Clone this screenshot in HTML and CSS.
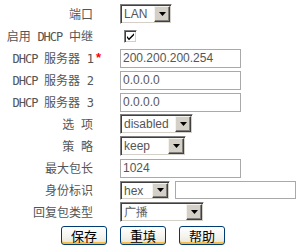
FILE: index.html
```html
<!DOCTYPE html>
<html>
<head>
<meta charset="utf-8">
<link rel="stylesheet" href="styles.css">
</head>
<body>
<form class="form">
  <div class="row">
    <span class="lbl">端口</span>
    <span class="ctl">
      <span class="sel w-lan"><select class="sel-in"><option>LAN</option></select><span class="sel-btn"><svg width="7" height="4" viewBox="0 0 7 4"><path d="M0 0H7L3.5 4Z" fill="#000"/></svg></span></span>
    </span>
  </div>
  <div class="row">
    <span class="lbl">启用 <span class="en">DHCP</span> 中继</span>
    <span class="ctl">
      <span class="chk"><svg width="9" height="9" viewBox="0 0 9 9"><path d="M1 4L3 6.2L8 1.2V3.2L3 8.2L1 6Z" fill="#000"/></svg></span>
    </span>
  </div>
  <div class="row">
    <span class="lbl"><span class="en">DHCP</span> 服务器 <span class="en">1</span><span class="req">*</span></span>
    <span class="ctl"><input class="txt" type="text" value="200.200.200.254"></span>
  </div>
  <div class="row">
    <span class="lbl"><span class="en">DHCP</span> 服务器 <span class="en">2</span></span>
    <span class="ctl"><input class="txt" type="text" value="0.0.0.0"></span>
  </div>
  <div class="row">
    <span class="lbl"><span class="en">DHCP</span> 服务器 <span class="en">3</span></span>
    <span class="ctl"><input class="txt" type="text" value="0.0.0.0"></span>
  </div>
  <div class="row">
    <span class="lbl">选 项</span>
    <span class="ctl">
      <span class="sel w-opt"><select class="sel-in"><option>disabled</option></select><span class="sel-btn"><svg width="7" height="4" viewBox="0 0 7 4"><path d="M0 0H7L3.5 4Z" fill="#000"/></svg></span></span>
    </span>
  </div>
  <div class="row">
    <span class="lbl">策 略</span>
    <span class="ctl">
      <span class="sel w-pol"><select class="sel-in"><option>keep</option></select><span class="sel-btn"><svg width="7" height="4" viewBox="0 0 7 4"><path d="M0 0H7L3.5 4Z" fill="#000"/></svg></span></span>
    </span>
  </div>
  <div class="row">
    <span class="lbl">最大包长</span>
    <span class="ctl"><input class="txt" type="text" value="1024"></span>
  </div>
  <div class="row">
    <span class="lbl">身份标识</span>
    <span class="ctl pair">
      <span class="sel w-hex"><select class="sel-in"><option>hex</option></select><span class="sel-btn"><svg width="7" height="4" viewBox="0 0 7 4"><path d="M0 0H7L3.5 4Z" fill="#000"/></svg></span></span>
      <input class="txt short" type="text" value="">
    </span>
  </div>
  <div class="row">
    <span class="lbl">回复包类型</span>
    <span class="ctl">
      <span class="sel w-rep"><select class="sel-in"><option>广播</option></select><span class="sel-btn"><svg width="7" height="4" viewBox="0 0 7 4"><path d="M0 0H7L3.5 4Z" fill="#000"/></svg></span></span>
    </span>
  </div>
  <div class="btns">
    <button type="button" class="btn">保存</button>
    <button type="button" class="btn">重填</button>
    <button type="button" class="btn">帮助</button>
  </div>
</form>
</body>
</html>
```
FILE: styles.css
```css
html, body {
  margin: 0;
  padding: 0;
  background: #fff;
}
.form {
  padding-top: 3px;
  font-family: "Noto Sans CJK SC", sans-serif;
  font-size: 12px;
  color: #555;
}
.row {
  display: flex;
  align-items: center;
  height: 22px;
}
.lbl {
  width: 93px;
  text-align: right;
  line-height: 22px;
  white-space: nowrap;
  word-spacing: 4px;
  position: relative;
}
.en {
  font-family: "DejaVu Sans Mono", monospace;
  font-size: 12px;
  letter-spacing: -1px;
}
.req {
  position: absolute;
  right: -8px;
  top: 0;
  color: #f00;
  font-family: "Liberation Sans", sans-serif;
  font-weight: bold;
  font-size: 13px;
}
.ctl {
  margin-left: 27px;
  display: flex;
  align-items: center;
}
.pair {
  gap: 5px;
}
.txt {
  box-sizing: border-box;
  width: 121px;
  height: 19px;
  margin: 0;
  padding: 0 2px;
  border: 1px solid #a9a9a9;
  background: #fff;
  font-family: "Liberation Sans", sans-serif;
  font-size: 12px;
  color: #555;
  outline: none;
}
.txt.short {
  height: 18px;
}
.sel {
  position: relative;
  display: inline-block;
  height: 20px;
}
.sel-in {
  -webkit-appearance: none;
  appearance: none;
  box-sizing: border-box;
  width: 100%;
  height: 100%;
  margin: 0;
  padding: 0 0 0 3px;
  border: 1px solid;
  border-color: #808080 #ffffff #ffffff #808080;
  box-shadow: inset 1px 1px 0 #404040, inset -1px -1px 0 #d4d0c8;
  border-radius: 0;
  background: #fff;
  font-family: "Liberation Sans", sans-serif;
  font-size: 12px;
  color: #555;
  outline: none;
}
.sel-btn {
  position: absolute;
  right: 2px;
  top: 2px;
  width: 16px;
  height: 16px;
  box-sizing: border-box;
  background: #d4d0c8;
  border: 1px solid;
  border-color: #f4f3ee #404040 #404040 #f4f3ee;
  box-shadow: inset -1px -1px 0 #808080;
  display: flex;
  align-items: center;
  justify-content: center;
  pointer-events: none;
}
.w-lan { width: 52px; }
.w-opt { width: 73px; }
.w-pol { width: 66px; }
.w-hex { width: 50px; height: 19px; }
.w-rep { width: 84px; }
.w-hex .sel-btn { height: 15px; }
.chk {
  margin-left: 4px;
  box-sizing: border-box;
  width: 13px;
  height: 13px;
  border: 1px solid;
  border-color: #808080 #ffffff #ffffff #808080;
  box-shadow: inset 1px 1px 0 #404040, inset -1px -1px 0 #d4d0c8;
  background: #fff;
  display: flex;
  align-items: center;
  justify-content: center;
}
.btns {
  display: flex;
  gap: 13px;
  padding-left: 61px;
  margin-top: 3px;
}
.btn {
  box-sizing: border-box;
  width: 46px;
  height: 19px;
  margin: 0;
  padding: 0;
  border: 1px solid #003c74;
  border-radius: 3px;
  background: linear-gradient(#ffffff, #f3f2ec 60%, #e6e3d6);
  box-shadow: inset 0 -2px 0 #f5bd4e, inset 0 1px 0 #fff;
  font-family: "Noto Sans CJK SC", sans-serif;
  font-size: 13px;
  line-height: 15px;
  color: #000;
}
```
